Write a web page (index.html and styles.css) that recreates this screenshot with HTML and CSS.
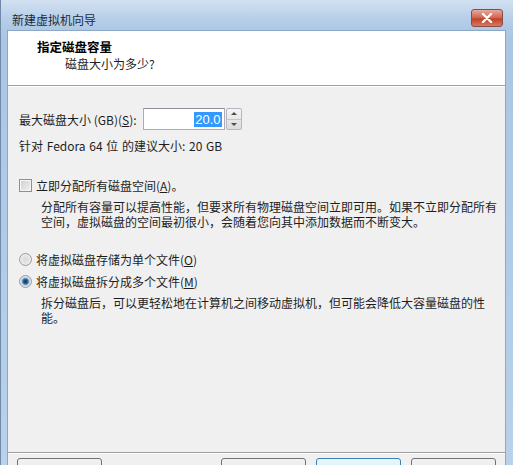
FILE: index.html
```html
<!DOCTYPE html>
<html lang="zh-CN">
<head>
<meta charset="UTF-8">
<title>新建虚拟机向导</title>
<link rel="stylesheet" href="styles.css">
</head>
<body>
  <div class="window">
    <div class="titlebar">
      <span class="title">新建虚拟机向导</span>
      <span class="close-btn">
        <svg width="12" height="10" viewBox="0 0 12 10"><path d="M2 1 L10 9 M10 1 L2 9" stroke="#fff" stroke-width="2.4" stroke-linecap="round"/></svg>
      </span>
    </div>

    <div class="client">
      <div class="wizard-head">
        <div class="head-title">指定磁盘容量</div>
        <div class="head-sub">磁盘大小为多少?</div>
      </div>

      <div class="wizard-body">
        <div class="size-row">
          <label for="diskSize">最大磁盘大小 (GB)(<u>S</u>):</label>
          <div class="spin">
            <div class="spin-input"><span class="sel">20.0</span></div>
            <div class="spin-btns">
              <span class="arrow up"></span>
              <span class="arrow down"></span>
            </div>
          </div>
        </div>
        <div class="hint">针对 Fedora 64 位 的建议大小: 20 GB</div>

        <div class="option check-opt">
          <span class="checkbox"></span>
          <span>立即分配所有磁盘空间(<u>A</u>)。</span>
        </div>
        <p class="desc">分配所有容量可以提高性能，但要求所有物理磁盘空间立即可用。如果不立即分配所有空间，虚拟磁盘的空间最初很小，会随着您向其中添加数据而不断变大。</p>

        <div class="option radio-opt first">
          <span class="radio"></span>
          <span>将虚拟磁盘存储为单个文件(<u>O</u>)</span>
        </div>
        <div class="option radio-opt">
          <span class="radio checked"></span>
          <span>将虚拟磁盘拆分成多个文件(<u>M</u>)</span>
        </div>
        <p class="desc">拆分磁盘后，可以更轻松地在计算机之间移动虚拟机，但可能会降低大容量磁盘的性能。</p>
      </div>

      <div class="wizard-foot">
        <span class="btn"></span>
        <span class="spacer"></span>
        <span class="btn"></span>
        <span class="btn default"></span>
        <span class="btn"></span>
      </div>
    </div>
  </div>
</body>
</html>
```

FILE: styles.css
```css
body {
  margin: 0;
  padding: 0;
  font-family: "Noto Sans CJK SC", sans-serif;
  font-size: 12px;
  color: #1e1e1e;
  background: #ffffff;
}

.window {
  width: 513px;
  height: 465px;
  overflow: hidden;
  display: flex;
  flex-direction: column;
  background: linear-gradient(180deg, #c3d7ec, #aac6e4 40px, #b9d1ea);
  box-sizing: border-box;
  border-left: 1px solid #6f8aa8;
}

.titlebar {
  height: 30px;
  flex: none;
  display: flex;
  align-items: center;
  padding: 0 10px 0 11px;
  background: linear-gradient(180deg, #d2e1f1, #b8cfe9 60%, #adc8e5);
}

.title {
  flex: 1;
  font-size: 12px;
  color: #1c2a3a;
  padding-top: 8px;
}

.close-btn {
  width: 30px;
  height: 16px;
  margin-top: 5px;
  display: flex;
  align-items: center;
  justify-content: center;
  border: 1px solid #8a4d45;
  border-radius: 3px;
  background: linear-gradient(180deg, #e9a99c, #d0624c 50%, #c0402a 55%, #d77a5f);
}

.client {
  flex: 1;
  margin: 0 7px 0 6px;
  display: flex;
  flex-direction: column;
  background: #f0f0f0;
  border: 1px solid #8ea8c4;
  border-bottom: none;
}

.wizard-head {
  height: 55px;
  flex: none;
  background: #ffffff;
  border-bottom: 1px solid #a0a0a0;
  box-shadow: 0 1px 0 #ffffff;
  padding: 7px 0 0 29px;
  box-sizing: border-box;
}

.head-title {
  font-weight: bold;
  font-size: 12.5px;
  line-height: 17px;
  color: #000;
}

.head-sub {
  padding-left: 28px;
  line-height: 17px;
}

.wizard-body {
  flex: 1;
  padding: 22px 0 0 11px;
}

.size-row {
  display: flex;
  align-items: center;
  gap: 6px;
}

.spin {
  display: flex;
  height: 22px;
}

.spin-input {
  width: 78px;
  border: 1px solid #abadb3;
  border-top-color: #8c8f98;
  background: #fff;
  display: flex;
  align-items: center;
  justify-content: flex-end;
  padding-right: 2px;
}

.sel {
  background: #3399ff;
  color: #fff;
  font-family: "Liberation Sans", sans-serif;
  font-size: 13px;
  line-height: 15px;
  padding: 0 1px;
}

.spin-btns {
  width: 14px;
  margin-left: 1px;
  display: flex;
  flex-direction: column;
  border: 1px solid #b5b8c0;
  border-radius: 2px;
  background: linear-gradient(180deg, #f4f4f4, #dcdcdc);
}

.arrow {
  flex: 1;
  display: flex;
  align-items: center;
  justify-content: center;
}

.arrow::before {
  content: "";
  border-left: 3px solid transparent;
  border-right: 3px solid transparent;
}

.arrow.up {
  border-bottom: 1px solid #c4c6cc;
}

.arrow.up::before {
  border-bottom: 3px solid #4d4d4d;
}

.arrow.down::before {
  border-top: 3px solid #4d4d4d;
}

.hint {
  margin-top: 7px;
  line-height: 17px;
  word-spacing: 1px;
}

.option {
  display: flex;
  align-items: center;
  gap: 4px;
  line-height: 17px;
}

.check-opt {
  margin-top: 23px;
}

.checkbox {
  width: 11px;
  height: 11px;
  border: 1px solid #8e8f8f;
  background: linear-gradient(135deg, #cfd0d2, #f1f1f1);
  box-shadow: inset 0 0 0 1px #f6f6f6;
}

.desc {
  margin: 5px 4px 0 22px;
  line-height: 15px;
}

.radio-opt {
  margin-top: 5px;
}

.radio-opt.first {
  margin-top: 22px;
}

.radio {
  width: 11px;
  height: 11px;
  border-radius: 50%;
  border: 1px solid #9a9a9a;
  background: radial-gradient(circle, #d8d8d8, #f4f4f4);
}

.radio.checked {
  background: radial-gradient(circle, #0f2b4a 0, #2e6ea8 2.5px, #bcd0e4 4px, #f4f4f4 6px);
}

.wizard-foot {
  height: 7px;
  flex: none;
  border-top: 1px solid #a0a0a0;
  box-shadow: inset 0 1px 0 #ffffff;
  display: flex;
  gap: 10px;
  padding: 5px 9px 0 9px;
}

.btn {
  width: 85px;
  height: 22px;
  flex: none;
  box-sizing: border-box;
  border: 1px solid #707070;
  border-radius: 3px;
  background: linear-gradient(180deg, #f2f2f2, #ebebeb 50%, #dddddd 50%, #cfcfcf);
}

.btn.default {
  border-color: #3c7fb1;
  background: linear-gradient(180deg, #eaf6fd, #d9f0fc 50%, #bee6fd 50%, #a7d9f5);
}

.spacer {
  flex: 1;
}
```
